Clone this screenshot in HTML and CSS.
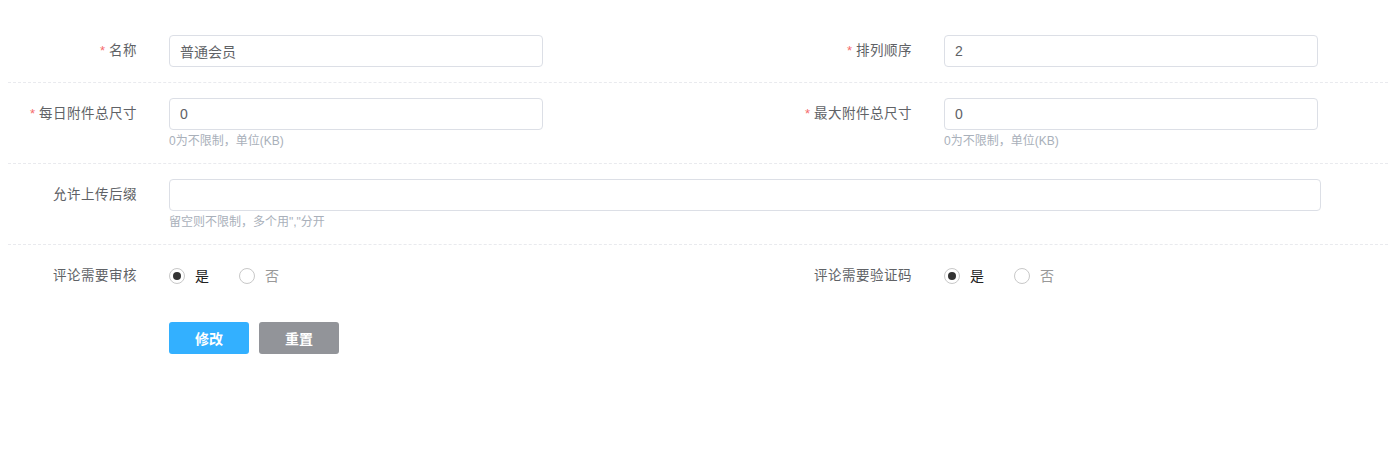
FILE: index.html
```html
<!DOCTYPE html>
<html lang="zh-CN">
<head>
<meta charset="utf-8">
<title>会员组编辑</title>
<link rel="stylesheet" href="styles.css">
</head>
<body>
<form class="form">
  <div class="row">
    <div class="field">
      <label class="label"><span class="req">*</span>名称</label>
      <div class="control"><input class="input" type="text" value="普通会员"></div>
    </div>
    <div class="field">
      <label class="label"><span class="req">*</span>排列顺序</label>
      <div class="control"><input class="input" type="text" value="2"></div>
    </div>
  </div>
  <div class="row">
    <div class="field">
      <label class="label"><span class="req">*</span>每日附件总尺寸</label>
      <div class="control"><input class="input" type="text" value="0"><div class="help">0为不限制，单位(KB)</div></div>
    </div>
    <div class="field">
      <label class="label"><span class="req">*</span>最大附件总尺寸</label>
      <div class="control"><input class="input" type="text" value="0"><div class="help">0为不限制，单位(KB)</div></div>
    </div>
  </div>
  <div class="row">
    <div class="field field-full">
      <label class="label">允许上传后缀</label>
      <div class="control control-full"><input class="input" type="text" value=""><div class="help">留空则不限制，多个用","分开</div></div>
    </div>
  </div>
  <div class="row row-last">
    <div class="field">
      <label class="label">评论需要审核</label>
      <div class="control radios">
        <span class="radio checked"><span class="dot"></span><span class="rtext">是</span></span>
        <span class="radio"><span class="dot"></span><span class="rtext">否</span></span>
      </div>
    </div>
    <div class="field">
      <label class="label">评论需要验证码</label>
      <div class="control radios">
        <span class="radio checked"><span class="dot"></span><span class="rtext">是</span></span>
        <span class="radio"><span class="dot"></span><span class="rtext">否</span></span>
      </div>
    </div>
  </div>
  <div class="actions">
    <button type="button" class="btn btn-primary">修改</button>
    <button type="button" class="btn btn-gray">重置</button>
  </div>
</form>
</body>
</html>
```
FILE: styles.css
```css
* { box-sizing: border-box; }
html, body { margin: 0; padding: 0; background: #fff; }
body {
  font-family: "Liberation Sans", "Noto Sans CJK SC", sans-serif;
  font-size: 14px;
  color: #606266;
}
.form {
  padding: 20px 0 0 8px;
}
.row {
  display: flex;
  padding: 15px 0 15px;
  border-bottom: 1px dashed #e9eaee;
}
.row-last { border-bottom: none; }
.field {
  display: flex;
  width: 775px;
  flex: none;
}
.field + .field {
  width: auto;
  flex: 1 1 auto;
  min-width: 0;
}
.field-full { width: auto; }
.label {
  width: 161px;
  flex: none;
  text-align: right;
  padding-right: 32px;
  line-height: 32px;
  height: 32px;
  font-size: 13.5px;
  letter-spacing: 0.5px;
  color: #606266;
  white-space: nowrap;
}
.req {
  color: #f56c6c;
  margin-right: 4px;
  font-size: 13px;
  letter-spacing: 0;
}
.control { width: 374px; }
.control-full { width: 1152px; }
.input {
  display: block;
  width: 100%;
  height: 32px;
  border: 1px solid #dcdfe6;
  border-radius: 4px;
  padding: 0 10px;
  font-family: inherit;
  font-size: 14px;
  color: #606266;
  outline: none;
  background: #fff;
}
.help {
  padding-top: 3px;
  line-height: 16px;
  font-size: 12px;
  color: #a9b0ba;
  margin-bottom: -1px;
}
.radios {
  display: flex;
  align-items: center;
  height: 32px;
  gap: 30px;
}
.radio {
  display: flex;
  align-items: center;
}
.dot {
  width: 16px;
  height: 16px;
  border: 1px solid #c8c8c8;
  border-radius: 50%;
  display: flex;
  align-items: center;
  justify-content: center;
}
.checked .dot::after {
  content: "";
  width: 8px;
  height: 8px;
  border-radius: 50%;
  background: #333;
}
.rtext {
  margin-left: 10px;
  font-size: 14px;
  line-height: 16px;
  color: #999;
}
.checked .rtext { color: #222; }
.actions {
  display: flex;
  gap: 10px;
  padding: 15px 0 0 161px;
}
.btn {
  width: 80px;
  height: 32px;
  border: none;
  border-radius: 3px;
  color: #fff;
  font-family: inherit;
  font-size: 14px;
  font-weight: bold;
  cursor: pointer;
}
.btn-primary { background: #33b0ff; }
.btn-gray { background: #929499; }
```
